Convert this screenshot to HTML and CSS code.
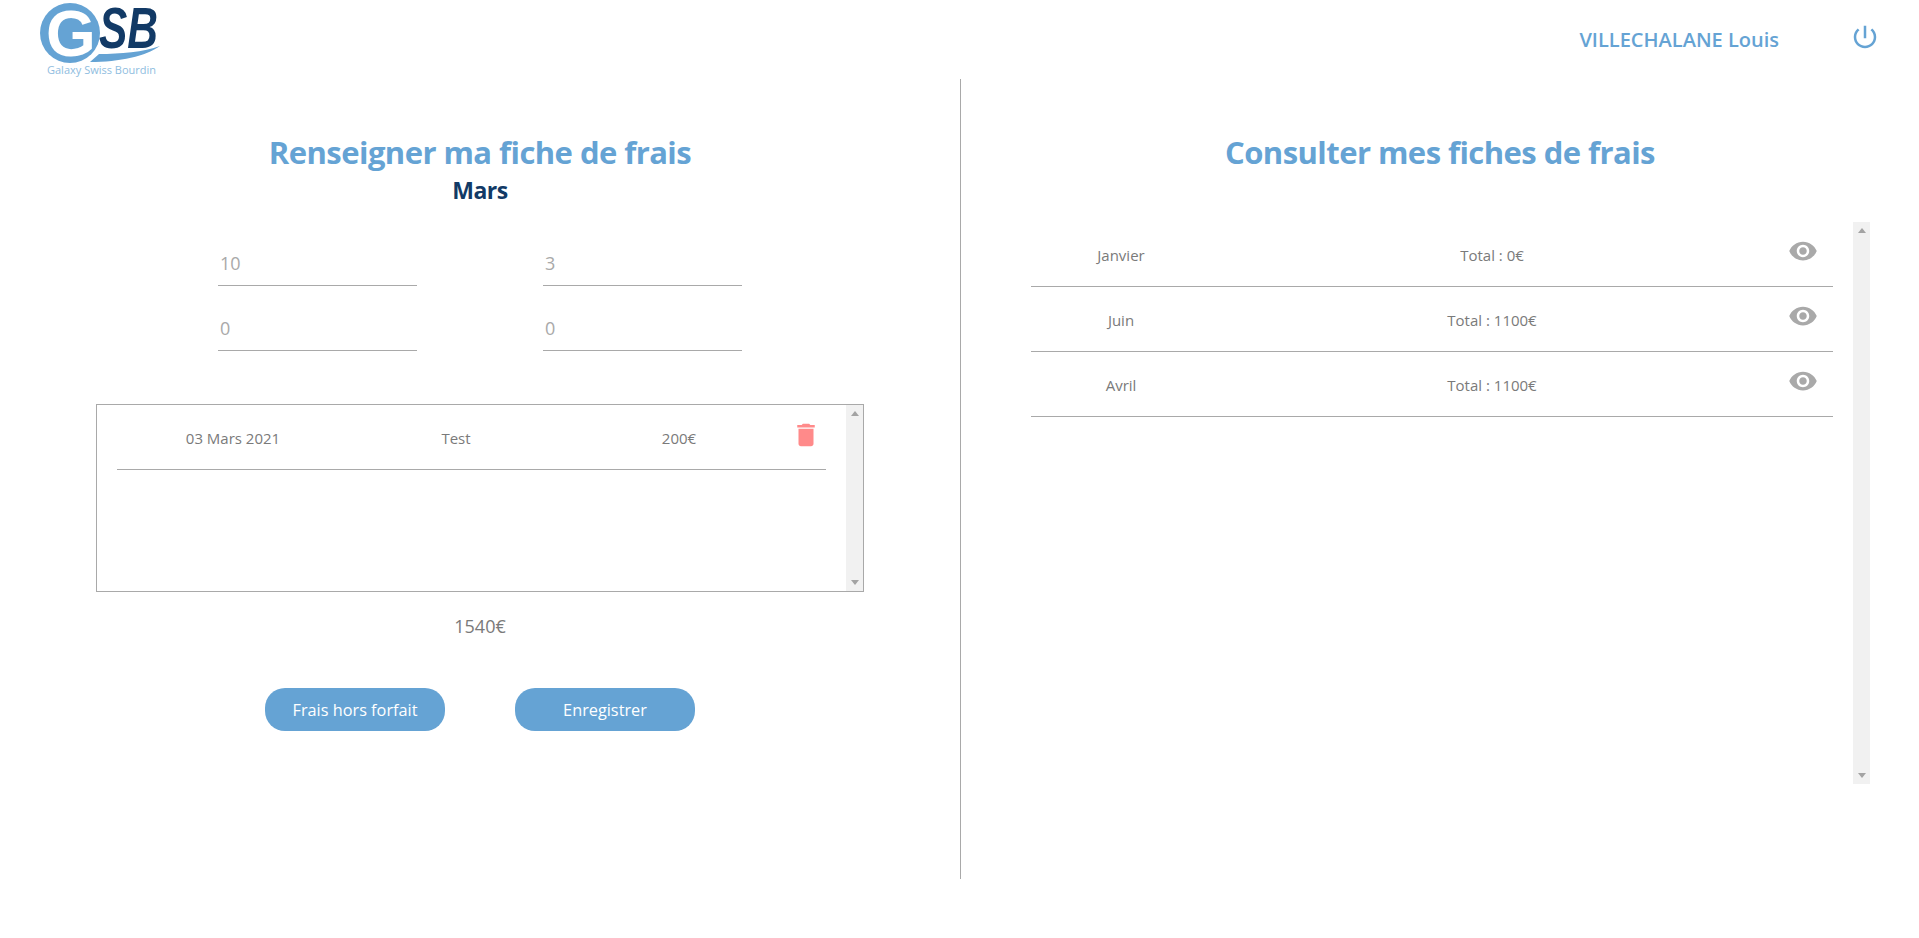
FILE: index.html
```html
<!DOCTYPE html>
<html lang="fr">
<head>
    <meta charset="utf-8" />
    <title>Fiches de frais</title>
    <link rel="stylesheet" href="styles.css">
</head>
<body>
    <header class="top-bar">
        <svg class="logo" viewBox="0 0 125 76" width="125" height="76" role="img" aria-label="GSB">
            <circle cx="30" cy="33" r="30" fill="#65a3d4" />
            <text class="logo-g" x="31" y="56" text-anchor="middle">G</text>
            <path d="M59 54 C80 54 104 52 120 46 C106 56 80 62 50 62 Z" fill="#65a3d4" />
            <text class="logo-sb" x="59" y="48" textLength="59" lengthAdjust="spacingAndGlyphs">SB</text>
            <text class="logo-name" x="7" y="74">Galaxy Swiss Bourdin</text>
        </svg>
        <div class="user-box">
            <span class="user-name">VILLECHALANE Louis</span>
            <svg class="power-icon" viewBox="0 0 24 24" width="30" height="30">
                <path d="M13 3h-2v10h2V3zm4.83 2.17l-1.42 1.42C17.99 7.86 19 9.81 19 12c0 3.87-3.13 7-7 7s-7-3.13-7-7c0-2.19 1.01-4.14 2.58-5.42L6.17 5.17C4.23 6.82 3 9.26 3 12c0 4.97 4.03 9 9 9s9-4.03 9-9c0-2.74-1.23-5.18-3.17-6.83z" />
            </svg>
        </div>
    </header>

    <main class="columns">
        <section class="panel panel-left">
            <h1>Renseigner ma fiche de frais</h1>
            <h2>Mars</h2>

            <div class="field-grid">
                <input class="field" type="text" value="10" />
                <input class="field" type="text" value="3" />
                <input class="field" type="text" value="0" />
                <input class="field" type="text" value="0" />
            </div>

            <div class="extras-box">
                <div class="extras-list">
                    <div class="extra-row">
                        <span>03 Mars 2021</span>
                        <span>Test</span>
                        <span>200€</span>
                        <svg class="trash-icon" viewBox="0 0 24 24" width="30" height="30">
                            <path d="M6 19c0 1.1.9 2 2 2h8c1.1 0 2-.9 2-2V7H6v12zM19 4h-3.5l-1-1h-5l-1 1H5v2h14V4z" />
                        </svg>
                    </div>
                </div>
                <div class="scrollbar">
                    <span class="arrow-up"></span>
                    <span class="arrow-down"></span>
                </div>
            </div>

            <p class="total">1540€</p>

            <div class="button-wrapper">
                <button class="btn" type="button">Frais hors forfait</button>
                <button class="btn" type="button">Enregistrer</button>
            </div>
        </section>

        <section class="panel panel-right">
            <h1>Consulter mes fiches de frais</h1>

            <div class="sheets-box">
                <div class="sheets-list">
                    <div class="sheet-row">
                        <span>Janvier</span>
                        <span>Total : 0€</span>
                        <svg class="eye-icon" viewBox="0 0 24 24" width="30" height="30">
                            <path d="M12 4.5C7 4.5 2.73 7.61 1 12c1.73 4.39 6 7.5 11 7.5s9.27-3.11 11-7.5c-1.73-4.39-6-7.5-11-7.5zM12 17c-2.76 0-5-2.24-5-5s2.24-5 5-5 5 2.24 5 5-2.24 5-5 5zm0-8c-1.66 0-3 1.34-3 3s1.34 3 3 3 3-1.34 3-3-1.34-3-3-3z" />
                        </svg>
                    </div>
                    <div class="sheet-row">
                        <span>Juin</span>
                        <span>Total : 1100€</span>
                        <svg class="eye-icon" viewBox="0 0 24 24" width="30" height="30">
                            <path d="M12 4.5C7 4.5 2.73 7.61 1 12c1.73 4.39 6 7.5 11 7.5s9.27-3.11 11-7.5c-1.73-4.39-6-7.5-11-7.5zM12 17c-2.76 0-5-2.24-5-5s2.24-5 5-5 5 2.24 5 5-2.24 5-5 5zm0-8c-1.66 0-3 1.34-3 3s1.34 3 3 3 3-1.34 3-3-1.34-3-3-3z" />
                        </svg>
                    </div>
                    <div class="sheet-row">
                        <span>Avril</span>
                        <span>Total : 1100€</span>
                        <svg class="eye-icon" viewBox="0 0 24 24" width="30" height="30">
                            <path d="M12 4.5C7 4.5 2.73 7.61 1 12c1.73 4.39 6 7.5 11 7.5s9.27-3.11 11-7.5c-1.73-4.39-6-7.5-11-7.5zM12 17c-2.76 0-5-2.24-5-5s2.24-5 5-5 5 2.24 5 5-2.24 5-5 5zm0-8c-1.66 0-3 1.34-3 3s1.34 3 3 3 3-1.34 3-3-1.34-3-3-3z" />
                        </svg>
                    </div>
                </div>
                <div class="scrollbar">
                    <span class="arrow-up"></span>
                    <span class="arrow-down"></span>
                </div>
            </div>
        </section>
    </main>
</body>
</html>
```

FILE: styles.css
```css
html, body {
    margin: 0;
    padding: 0;
    background-color: #fff;
}

body {
    font-family: "Open Sans", "Noto Sans", sans-serif;
    color: #7a7a7a;
}

/* top bar */
.top-bar {
    height: 79px;
    display: flex;
    justify-content: space-between;
    align-items: flex-start;
    padding: 0 39px 0 40px;
    box-sizing: border-box;
}

.logo {
    display: block;
    overflow: visible;
}

.logo-g {
    font-family: "Liberation Sans", sans-serif;
    font-size: 64px;
    font-weight: bold;
    fill: #fff;
}

.logo-sb {
    font-family: "Liberation Sans", sans-serif;
    font-size: 57px;
    font-weight: bold;
    font-style: italic;
    fill: #123a66;
}

.logo-name {
    font-family: "Open Sans", sans-serif;
    font-size: 11px;
    fill: #8fbde0;
}

.user-box {
    display: flex;
    align-items: flex-start;
    gap: 71px;
    padding-top: 22px;
}

.user-name {
    margin-top: 4px;
    font-size: 20px;
    line-height: 27px;
    font-weight: 600;
    color: #65a3d4;
}

.power-icon {
    fill: #65a3d4;
}

/* two columns */
.columns {
    display: grid;
    grid-template-columns: 960px 1fr;
    height: 800px;
}

.panel-right {
    border-left: 1px solid #a9a9a9;
}

h1 {
    margin: 51px 0 0;
    font-size: 31px;
    line-height: 44px;
    font-weight: 700;
    letter-spacing: -0.55px;
    text-align: center;
    color: #65a3d4;
}

h2 {
    margin: 0;
    font-size: 23px;
    line-height: 32px;
    font-weight: 700;
    letter-spacing: -0.5px;
    text-align: center;
    color: #123a66;
}

/* inputs */
.field-grid {
    display: grid;
    grid-template-columns: 199px 199px;
    column-gap: 126px;
    row-gap: 21px;
    justify-content: center;
    margin-top: 36px;
}

.field {
    width: 100%;
    height: 44px;
    box-sizing: border-box;
    padding: 0 2px 2px;
    border: none;
    border-bottom: 1px solid #a9a9a9;
    outline: none;
    font-family: inherit;
    font-size: 18px;
    color: #a9a9a9;
}

/* frais hors forfait */
.extras-box {
    display: flex;
    width: 768px;
    height: 188px;
    box-sizing: border-box;
    margin: 53px auto 0;
    border: 1px solid #a9a9a9;
}

.extras-list {
    flex: 1;
    padding: 0 20px;
}

.extra-row {
    display: grid;
    grid-template-columns: 232px 214px 232px 31px;
    align-items: center;
    height: 65px;
    box-sizing: border-box;
    border-bottom: 1px solid #a9a9a9;
    font-size: 15px;
    text-align: center;
}

.extra-row span {
    padding-top: 2px;
}

.trash-icon {
    margin: -4px 0 0 -4px;
    fill: #ff8a8a;
}

.scrollbar {
    display: flex;
    flex-direction: column;
    justify-content: space-between;
    align-items: center;
    flex: none;
    width: 17px;
    padding: 6px 0;
    box-sizing: border-box;
    background-color: #f1f1f1;
}

.arrow-up {
    border: 4px solid transparent;
    border-top: none;
    border-bottom: 5px solid #a3a3a3;
}

.arrow-down {
    border: 4px solid transparent;
    border-bottom: none;
    border-top: 5px solid #a3a3a3;
}

.total {
    margin: 22px 0 0;
    font-size: 18px;
    line-height: 24px;
    text-align: center;
}

.button-wrapper {
    display: flex;
    justify-content: center;
    gap: 70px;
    margin-top: 50px;
}

.btn {
    width: 180px;
    height: 43px;
    padding: 0;
    border: none;
    border-radius: 20px;
    background-color: #65a3d4;
    font-family: inherit;
    font-size: 16.3px;
    line-height: 45px;
    color: #fff;
    cursor: pointer;
}

/* fiches de frais */
.sheets-box {
    display: flex;
    gap: 20px;
    height: 562px;
    margin: 48px 49px 0 70px;
}

.sheets-list {
    flex: 1;
}

.sheet-row {
    display: grid;
    grid-template-columns: 180px 562px 60px;
    align-items: center;
    height: 65px;
    box-sizing: border-box;
    border-bottom: 1px solid #a9a9a9;
    font-size: 15px;
    text-align: center;
}

.sheet-row span {
    padding-top: 2px;
}

.eye-icon {
    justify-self: center;
    margin-top: -6px;
    fill: #a9a9a9;
}
```
